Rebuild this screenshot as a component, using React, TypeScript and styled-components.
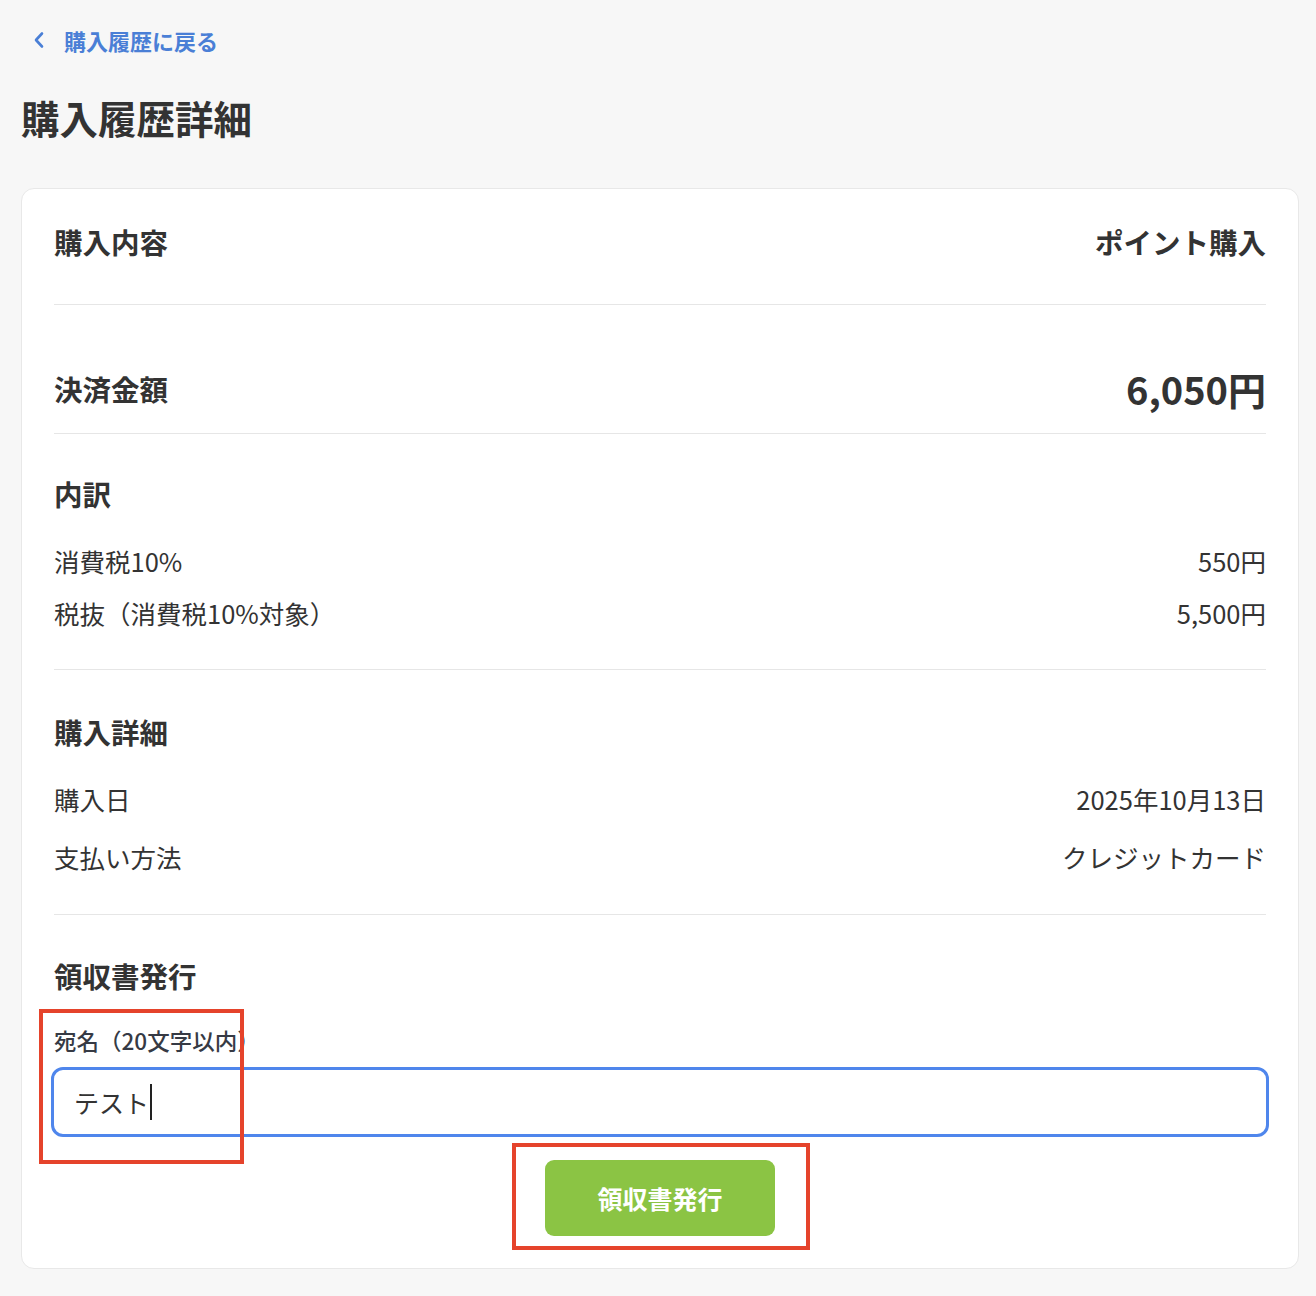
import React from "react";
import styled, { createGlobalStyle } from "styled-components";

const GlobalStyle = createGlobalStyle`
  * { box-sizing: border-box; }
  body {
    margin: 0;
    background: #f7f7f7;
    font-family: "Noto Sans CJK JP", "Noto Sans", sans-serif;
    color: #333333;
  }
`;

const Page = styled.main`
  padding: 0 17px 27px 21px;
`;

const BackLink = styled.a`
  display: flex;
  align-items: center;
  gap: 18px;
  height: 80px;
  padding-left: 11px;
  color: #4a7fd6;
  font-size: 22px;
  font-weight: 700;
  text-decoration: none;
  svg {
    display: block;
  }
`;

const Title = styled.h1`
  margin: 0;
  font-size: 38.5px;
  line-height: 74px;
  font-weight: 700;
  color: #333333;
`;

const Card = styled.section`
  margin-top: 34px;
  background: #ffffff;
  border: 1px solid #e8e8e8;
  border-radius: 13px;
  padding: 33px 32px 32px;
`;

const Block = styled.div<{ $pt: number; $pb: number; $last?: boolean }>`
  padding-top: ${({ $pt }) => $pt}px;
  padding-bottom: ${({ $pb }) => $pb}px;
  border-bottom: ${({ $last }) => ($last ? "none" : "1px solid #e6e6e6")};
`;

const Row = styled.div<{ $gap?: number }>`
  display: flex;
  align-items: center;
  justify-content: space-between;
  margin-top: ${({ $gap }) => $gap ?? 0}px;
`;

const Heading = styled.h2`
  margin: 0;
  font-size: 28.5px;
  line-height: 40px;
  font-weight: 700;
`;

const Amount = styled.span`
  font-size: 38px;
  line-height: 52px;
  font-weight: 700;
`;

const Text = styled.span`
  font-size: 25.5px;
  line-height: 36px;
  font-weight: 400;
`;

const Annotated = styled.div`
  position: relative;
`;

const Mark = styled.span<{ $t: number; $r: number; $b: number; $l: number }>`
  position: absolute;
  top: ${({ $t }) => $t}px;
  right: ${({ $r }) => $r}px;
  bottom: ${({ $b }) => $b}px;
  left: ${({ $l }) => $l}px;
  border: 4px solid #e5432b;
  pointer-events: none;
`;

const FieldLabel = styled.label`
  display: block;
  padding-top: 29px;
  font-size: 22.5px;
  line-height: 30px;
  font-weight: 500;
  color: #363a44;
`;

const Field = styled.div`
  display: flex;
  align-items: center;
  height: 70px;
  margin: 12px -3px 0;
  padding: 0 20px;
  border: 3px solid #4f86ec;
  border-radius: 12px;
  font-size: 25px;
  color: #333333;
`;

const Caret = styled.span`
  width: 2px;
  height: 36px;
  margin-left: 1px;
  background: #222222;
`;

const Actions = styled.div`
  display: flex;
  justify-content: center;
  margin-top: 23px;
`;

const IssueButton = styled.button`
  width: 230px;
  height: 76px;
  border: none;
  border-radius: 9px;
  background: #8bc444;
  color: #ffffff;
  font-family: inherit;
  font-size: 25px;
  font-weight: 700;
  cursor: pointer;
`;

const ChevronLeft = () => (
  <svg width="14" height="18" viewBox="0 0 14 18" fill="none">
    <polyline
      points="10,2.5 4,9 10,15.5"
      stroke="#4a7fd6"
      strokeWidth="2.6"
      strokeLinecap="round"
      strokeLinejoin="round"
    />
  </svg>
);

export default function App() {
  return (
    <>
      <GlobalStyle />
      <Page>
        <BackLink href="#">
          <ChevronLeft />
          購入履歴に戻る
        </BackLink>
        <Title>購入履歴詳細</Title>
        <Card>
          <Block $pt={0} $pb={42}>
            <Row>
              <Heading>購入内容</Heading>
              <Heading as="span">ポイント購入</Heading>
            </Row>
          </Block>
          <Block $pt={58} $pb={18}>
            <Row>
              <Heading>決済金額</Heading>
              <Amount>6,050円</Amount>
            </Row>
          </Block>
          <Block $pt={40} $pb={38}>
            <Heading>内訳</Heading>
            <Row $gap={29}>
              <Text>消費税10%</Text>
              <Text>550円</Text>
            </Row>
            <Row $gap={16}>
              <Text>税抜（消費税10%対象）</Text>
              <Text>5,500円</Text>
            </Row>
          </Block>
          <Block $pt={42} $pb={39}>
            <Heading>購入詳細</Heading>
            <Row $gap={29}>
              <Text>購入日</Text>
              <Text>2025年10月13日</Text>
            </Row>
            <Row $gap={22}>
              <Text>支払い方法</Text>
              <Text>クレジットカード</Text>
            </Row>
          </Block>
          <Block $pt={41} $pb={0} $last>
            <Heading>領収書発行</Heading>
            <Annotated>
              <FieldLabel>宛名（20文字以内）</FieldLabel>
              <Field>
                テスト
                <Caret />
              </Field>
              <Mark $t={13} $r={1022} $b={-27} $l={-15} />
            </Annotated>
            <Actions>
              <Annotated>
                <IssueButton type="button">領収書発行</IssueButton>
                <Mark $t={-17} $r={-35} $b={-14} $l={-33} />
              </Annotated>
            </Actions>
          </Block>
        </Card>
      </Page>
    </>
  );
}
